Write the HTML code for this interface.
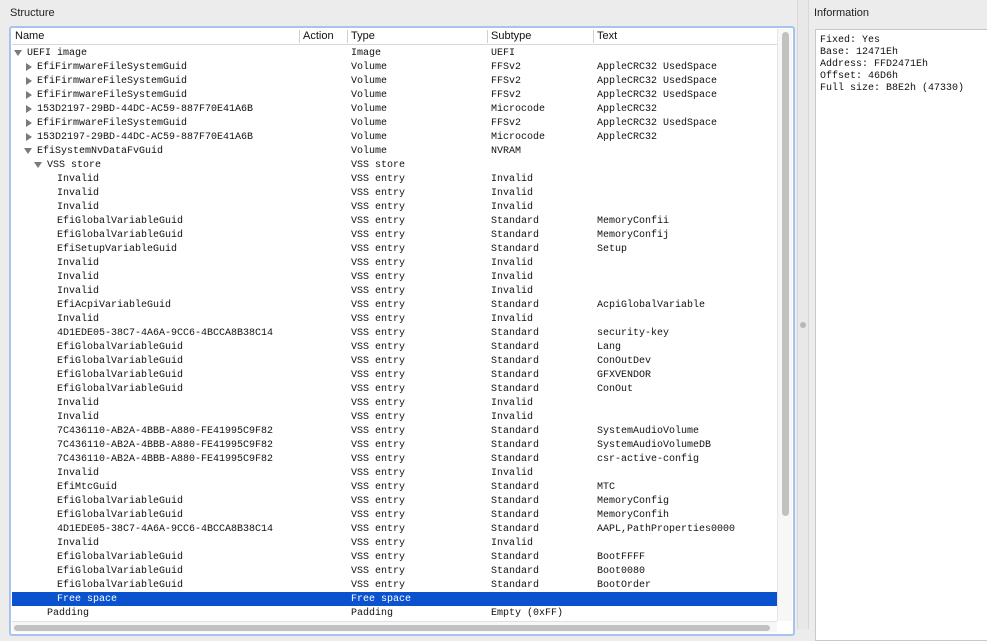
<!DOCTYPE html>
<html><head><meta charset="utf-8"><style>
body{margin:0;width:987px;height:629px;background:#ececec;position:relative;overflow:hidden;font-family:"Liberation Mono",monospace;font-size:10px;color:#111}
.lbl{position:absolute;font-family:"Liberation Sans",sans-serif;font-size:11px;color:#222}
.frame{position:absolute;left:9px;top:26px;width:786px;height:610px;border:2px solid #a8c3f0;border-radius:3px;background:#fff;box-sizing:border-box}
.hdr{position:absolute;left:12px;top:29px;width:765px;height:15px;background:#fff;border-bottom:1px solid #d8d8d8;font-family:"Liberation Sans",sans-serif;font-size:11px}
.hdr span{position:absolute;top:1px}
.sep{position:absolute;top:1px;width:1px;height:13px;background:#d0d0d0}
.row{position:absolute;left:12px;width:765px;height:14px;line-height:14px;white-space:pre}
.row span{position:absolute;top:0}
.sel{background:#0b52cf;color:#fff}
.tri{position:absolute;top:3px}
.vs{position:absolute;left:777px;top:29px;width:14px;height:592px;background:#f7f7f7;border-left:1px solid #e6e6e6}
.thumb{position:absolute;left:4px;top:3px;width:7px;height:484px;background:#c1c1c1;border-radius:4px}
.hs{position:absolute;left:12px;top:621px;width:765px;height:10px;background:#f7f7f7;border-top:1px solid #e0e0e0}
.hthumb{position:absolute;left:2px;top:3px;width:756px;height:6px;background:#c1c1c1;border-radius:3px}
.info{position:absolute;left:815px;top:29px;width:180px;height:610px;background:#fff;border:1px solid #c8c8c8}
.info div{position:absolute;left:4px;white-space:pre}
</style></head><body>
<div class="lbl" style="left:10px;top:7px">Structure</div>
<div class="lbl" style="left:814px;top:7px">Information</div>
<div style="position:absolute;left:797px;top:0;width:10px;height:629px;background:#e8e8e8;border-left:1px solid #d8d8d8;border-right:1px solid #d8d8d8"></div>
<div style="position:absolute;left:800px;top:322px;width:6px;height:6px;border-radius:3px;background:#b8b8b8"></div>
<div class="frame"></div>
<div class="hdr">
<span style="left:3px">Name</span><div class="sep" style="left:287px"></div>
<span style="left:291px">Action</span><div class="sep" style="left:335px"></div>
<span style="left:339px">Type</span><div class="sep" style="left:475px"></div>
<span style="left:479px">Subtype</span><div class="sep" style="left:581px"></div>
<span style="left:585px">Text</span>
</div>
<div id="rows"></div>
<div class="vs"><div class="thumb"></div></div>
<div class="hs"><div class="hthumb"></div></div>
<div class="info">
<div style="top:5px">Fixed: Yes</div>
<div style="top:17px">Base: 12471Eh</div>
<div style="top:29px">Address: FFD2471Eh</div>
<div style="top:41px">Offset: 46D6h</div>
<div style="top:53px">Full size: B8E2h (47330)</div>
</div>
<script>
var R=[
[0,'d','UEFI image','Image','UEFI',''],
[1,'r','EfiFirmwareFileSystemGuid','Volume','FFSv2','AppleCRC32 UsedSpace'],
[1,'r','EfiFirmwareFileSystemGuid','Volume','FFSv2','AppleCRC32 UsedSpace'],
[1,'r','EfiFirmwareFileSystemGuid','Volume','FFSv2','AppleCRC32 UsedSpace'],
[1,'r','153D2197-29BD-44DC-AC59-887F70E41A6B','Volume','Microcode','AppleCRC32'],
[1,'r','EfiFirmwareFileSystemGuid','Volume','FFSv2','AppleCRC32 UsedSpace'],
[1,'r','153D2197-29BD-44DC-AC59-887F70E41A6B','Volume','Microcode','AppleCRC32'],
[1,'d','EfiSystemNvDataFvGuid','Volume','NVRAM',''],
[2,'d','VSS store','VSS store','',''],
[3,'','Invalid','VSS entry','Invalid',''],
[3,'','Invalid','VSS entry','Invalid',''],
[3,'','Invalid','VSS entry','Invalid',''],
[3,'','EfiGlobalVariableGuid','VSS entry','Standard','MemoryConfii'],
[3,'','EfiGlobalVariableGuid','VSS entry','Standard','MemoryConfij'],
[3,'','EfiSetupVariableGuid','VSS entry','Standard','Setup'],
[3,'','Invalid','VSS entry','Invalid',''],
[3,'','Invalid','VSS entry','Invalid',''],
[3,'','Invalid','VSS entry','Invalid',''],
[3,'','EfiAcpiVariableGuid','VSS entry','Standard','AcpiGlobalVariable'],
[3,'','Invalid','VSS entry','Invalid',''],
[3,'','4D1EDE05-38C7-4A6A-9CC6-4BCCA8B38C14','VSS entry','Standard','security-key'],
[3,'','EfiGlobalVariableGuid','VSS entry','Standard','Lang'],
[3,'','EfiGlobalVariableGuid','VSS entry','Standard','ConOutDev'],
[3,'','EfiGlobalVariableGuid','VSS entry','Standard','GFXVENDOR'],
[3,'','EfiGlobalVariableGuid','VSS entry','Standard','ConOut'],
[3,'','Invalid','VSS entry','Invalid',''],
[3,'','Invalid','VSS entry','Invalid',''],
[3,'','7C436110-AB2A-4BBB-A880-FE41995C9F82','VSS entry','Standard','SystemAudioVolume'],
[3,'','7C436110-AB2A-4BBB-A880-FE41995C9F82','VSS entry','Standard','SystemAudioVolumeDB'],
[3,'','7C436110-AB2A-4BBB-A880-FE41995C9F82','VSS entry','Standard','csr-active-config'],
[3,'','Invalid','VSS entry','Invalid',''],
[3,'','EfiMtcGuid','VSS entry','Standard','MTC'],
[3,'','EfiGlobalVariableGuid','VSS entry','Standard','MemoryConfig'],
[3,'','EfiGlobalVariableGuid','VSS entry','Standard','MemoryConfih'],
[3,'','4D1EDE05-38C7-4A6A-9CC6-4BCCA8B38C14','VSS entry','Standard','AAPL,PathProperties0000'],
[3,'','Invalid','VSS entry','Invalid',''],
[3,'','EfiGlobalVariableGuid','VSS entry','Standard','BootFFFF'],
[3,'','EfiGlobalVariableGuid','VSS entry','Standard','Boot0080'],
[3,'','EfiGlobalVariableGuid','VSS entry','Standard','BootOrder'],
[3,'s','Free space','Free space','',''],
[2,'','Padding','Padding','Empty (0xFF)','']
];
var h='';
R.forEach(function(r,i){
 var x=3+r[0]*10;
 var cls='row'+(r[1]=='s'?' sel':'');
 h+='<div class="'+cls+'" style="top:'+(46+14*i)+'px">';
 if(r[1]=='d')h+='<svg class="tri" style="left:'+(x-1)+'px;top:4px" width="9" height="8"><path d="M0 0H8L4 6Z" fill="#7a7a7a"/></svg>';
 if(r[1]=='r')h+='<svg class="tri" style="left:'+x+'px" width="8" height="9"><path d="M1 0V8L7 4Z" fill="#7a7a7a"/></svg>';
 h+='<span style="left:'+(x+12)+'px;top:1px">'+r[2]+'</span><span style="left:339px;top:1px">'+r[3]+'</span><span style="left:479px;top:1px">'+r[4]+'</span><span style="left:585px;top:1px">'+r[5]+'</span></div>';
});
document.getElementById('rows').innerHTML=h;
</script>
</body></html>
